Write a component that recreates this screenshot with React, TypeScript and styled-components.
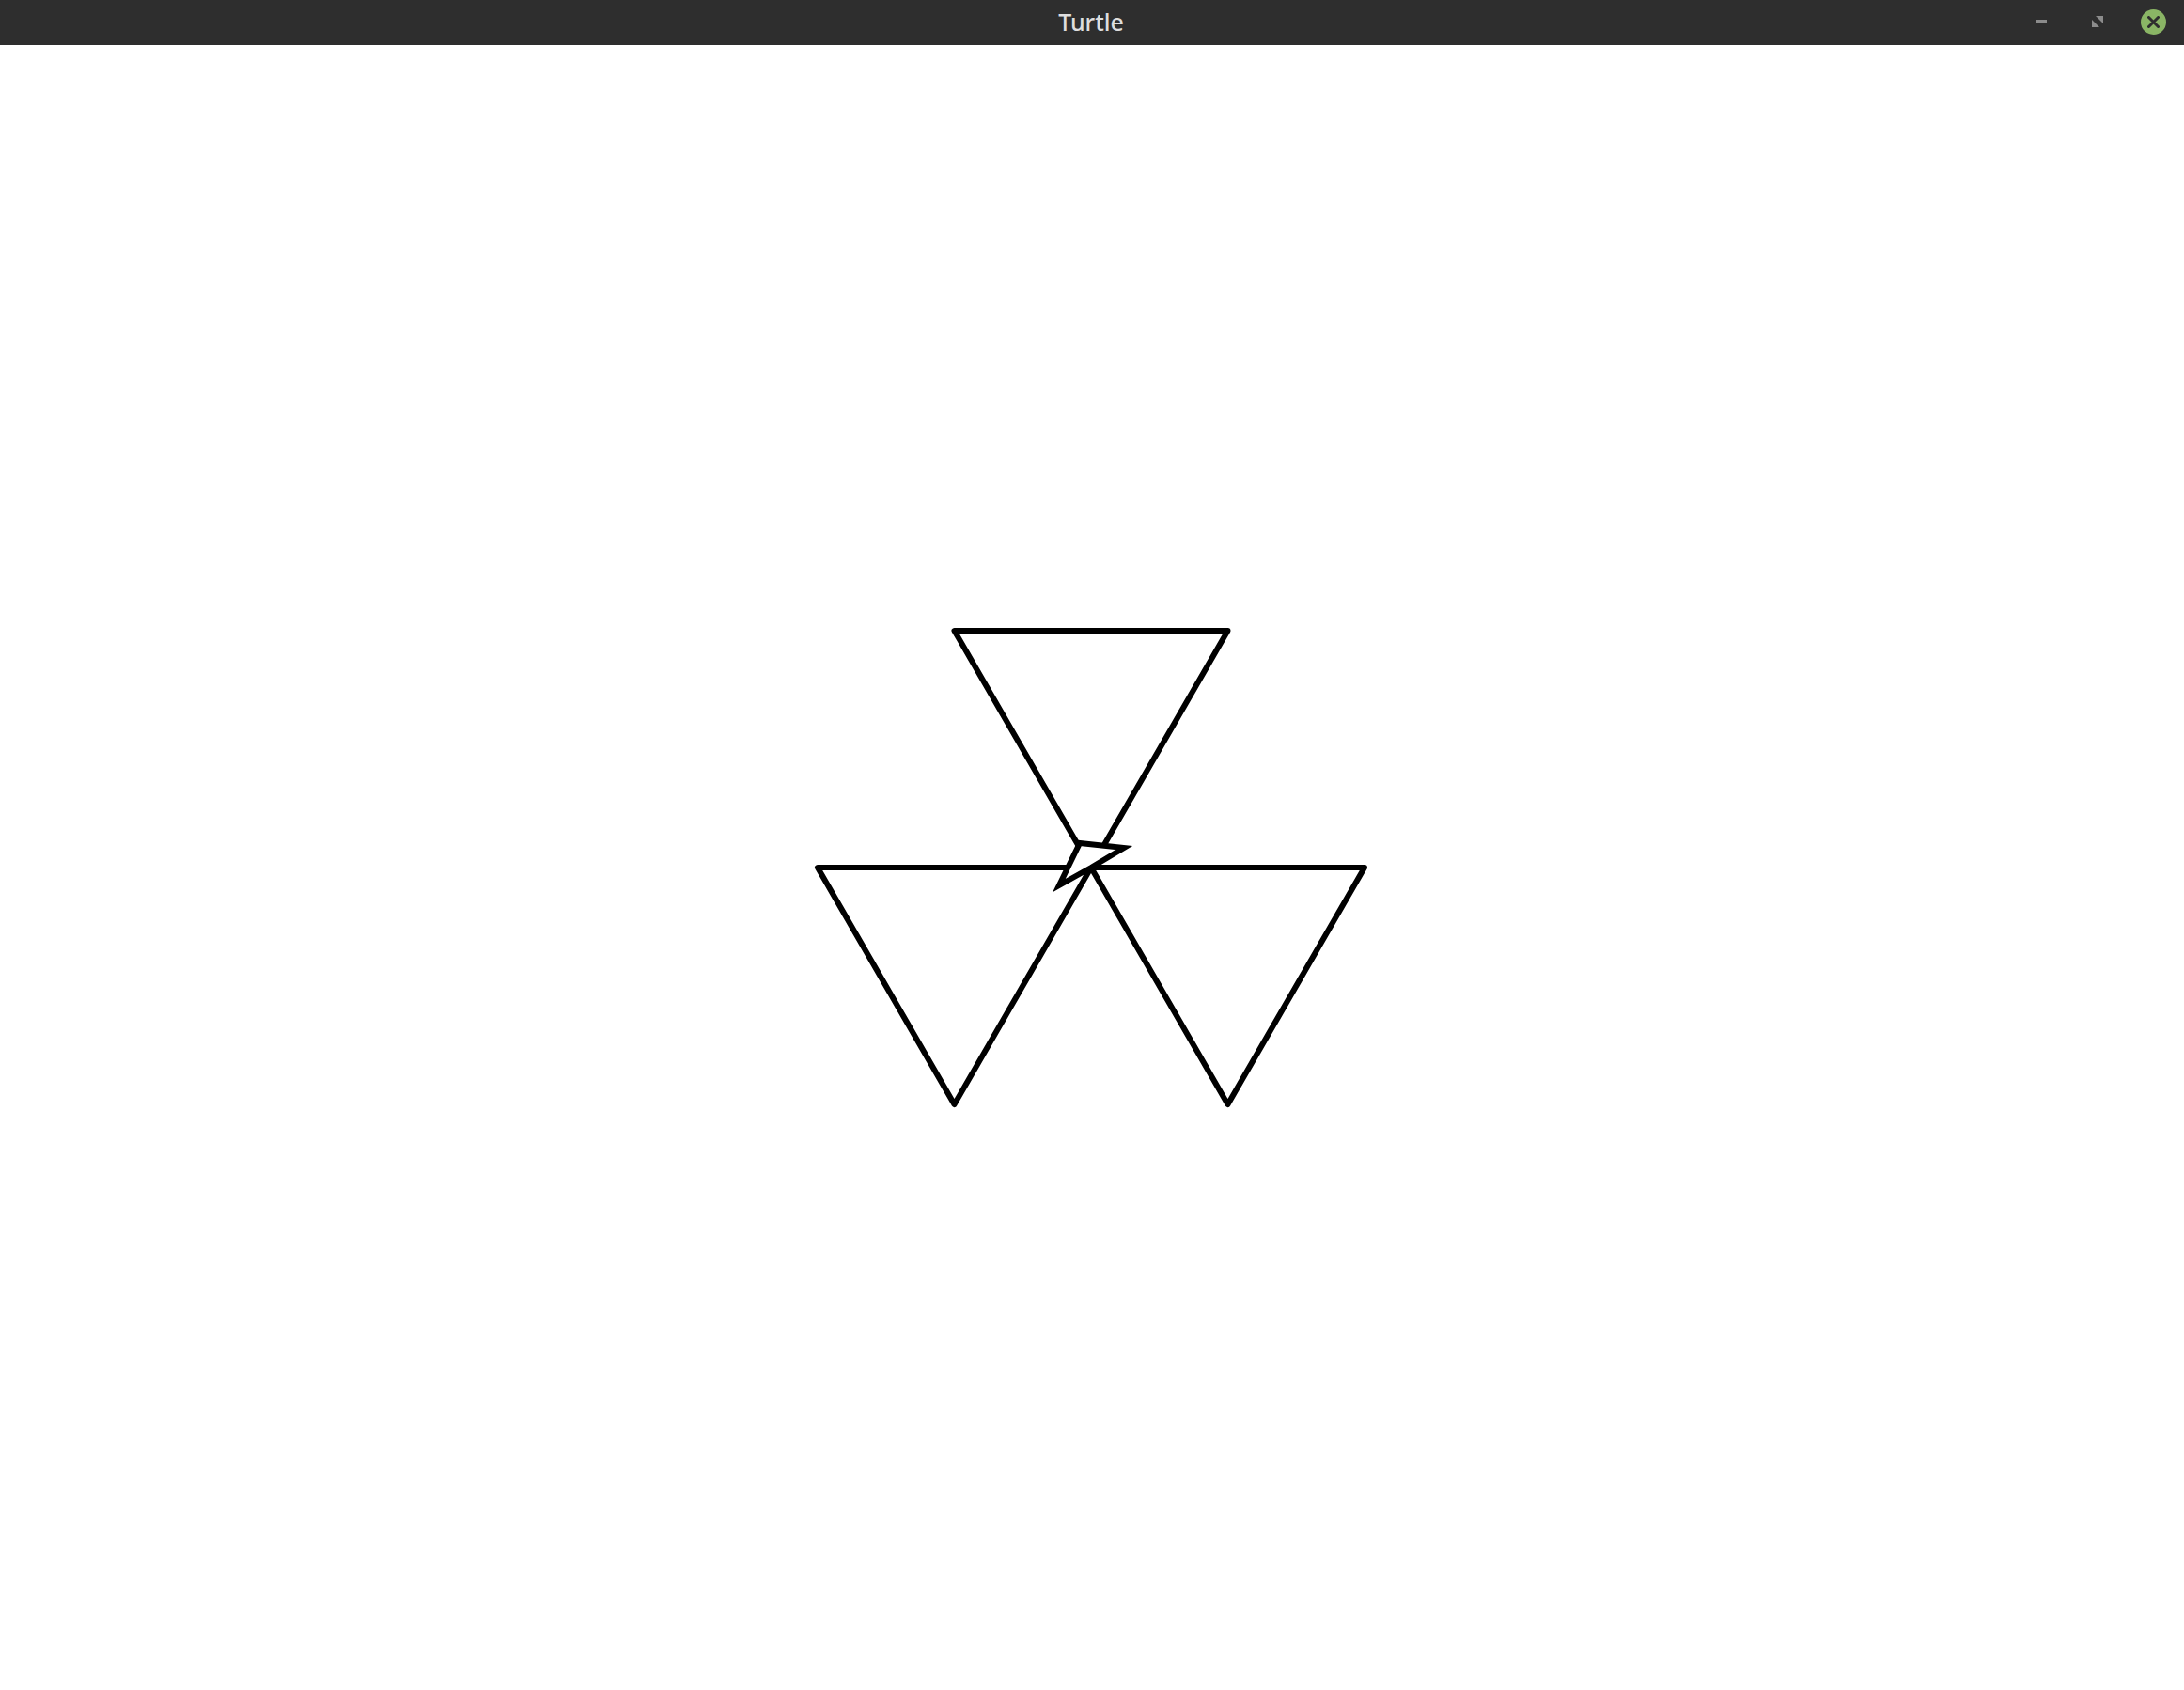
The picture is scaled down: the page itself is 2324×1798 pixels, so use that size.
import styled, { createGlobalStyle } from "styled-components";

const GlobalStyle = createGlobalStyle`
  html, body {
    margin: 0;
    padding: 0;
    background: #ffffff;
  }
  body {
    font-family: "Noto Sans", "Open Sans", sans-serif;
  }
`;

const Window = styled.div`
  display: flex;
  flex-direction: column;
  width: 100vw;
  height: 100vh;
  overflow: hidden;
`;

const TitleBar = styled.div`
  display: grid;
  grid-template-columns: 1fr auto 1fr;
  align-items: center;
  height: 48px;
  flex: 0 0 48px;
  background: #2e2e2e;
`;

const Title = styled.div`
  grid-column: 2;
  color: #dedede;
  font-family: "Noto Sans", "Open Sans", sans-serif;
  font-size: 25px;
  font-weight: 500;
  line-height: 1;
  margin-top: -2px;
  margin-left: -2px;
`;

const Controls = styled.div`
  grid-column: 3;
  justify-self: end;
  display: flex;
  align-items: center;
  padding-right: 19px;
  margin-top: -2px;
`;

const ControlButton = styled.div<{ $w?: number }>`
  display: flex;
  align-items: center;
  justify-content: center;
  width: ${(p) => p.$w ?? 60}px;
  height: 40px;
`;

const MinimizeBar = styled.div`
  width: 12px;
  height: 4px;
  background: #8c8c8c;
`;

const CloseCircle = styled.div`
  display: flex;
  align-items: center;
  justify-content: center;
  width: 27px;
  height: 27px;
  border-radius: 50%;
  background: #8ab565;
`;

const Canvas = styled.div`
  flex: 1;
  display: flex;
  align-items: center;
  justify-content: center;
  background: #ffffff;
`;

const Drawing = styled.svg`
  display: block;
  margin-left: -3px;
`;

const S = 291;
const H = 252;

// three triangles meeting at the turtle's origin
const triangles = [
  [
    [-S / 2, -H],
    [S / 2, -H],
    [0, 0],
  ],
  [
    [-S, 0],
    [0, 0],
    [-S / 2, H],
  ],
  [
    [0, 0],
    [S, 0],
    [S / 2, H],
  ],
];

// classic arrow cursor, tip at origin
const turtle = [
  [0, 0],
  [-34, 19],
  [-12, -26],
  [35, -21],
];

const pts = (list: number[][]) => list.map((p) => p.join(",")).join(" ");

export default function App() {
  return (
    <>
      <GlobalStyle />
      <Window>
        <TitleBar>
          <Title>Turtle</Title>
          <Controls>
            <ControlButton $w={28}>
              <MinimizeBar />
            </ControlButton>
            <ControlButton $w={92}>
              <svg width="12" height="12" viewBox="0 0 12 12">
                <polygon points="4,0 12,0 12,8" fill="#8c8c8c" />
                <polygon points="0,4 8,12 0,12" fill="#8c8c8c" />
              </svg>
            </ControlButton>
            <ControlButton $w={27}>
              <CloseCircle>
                <svg width="13" height="13" viewBox="0 0 13 13">
                  <path
                    d="M1.5 1.5 L11.5 11.5 M11.5 1.5 L1.5 11.5"
                    stroke="#2e2e2e"
                    strokeWidth="3"
                    strokeLinecap="round"
                  />
                </svg>
              </CloseCircle>
            </ControlButton>
          </Controls>
        </TitleBar>
        <Canvas>
          <Drawing width="640" height="600" viewBox="-320 -300 640 600">
            <g
              fill="none"
              stroke="#000"
              strokeWidth="6"
              strokeLinejoin="round"
              strokeLinecap="round"
            >
              {triangles.map((t, i) => (
                <polygon key={i} points={pts(t)} />
              ))}
            </g>
            <polygon
              points={pts(turtle)}
              fill="#ffffff"
              stroke="#000"
              strokeWidth="6"
              strokeLinejoin="miter"
            />
          </Drawing>
        </Canvas>
      </Window>
    </>
  );
}
